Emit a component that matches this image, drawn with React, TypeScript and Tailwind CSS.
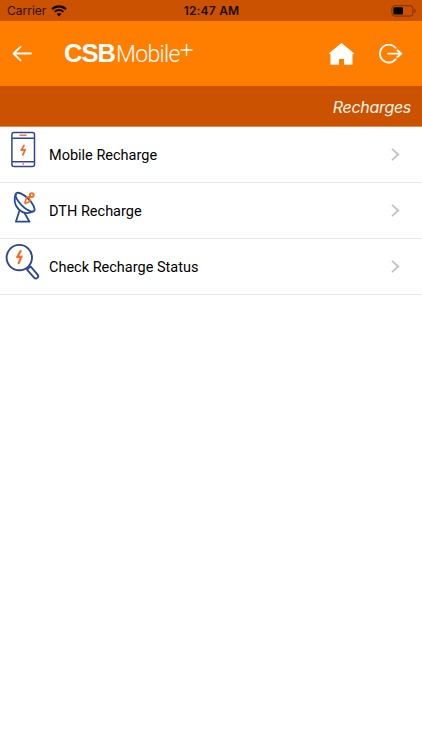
import React from "react";

function StatusBar() {
  return (
    <div className="flex h-[21px] items-center bg-[#cb5200] font-['Inter','Liberation_Sans',sans-serif] text-black">
      <div className="flex flex-1 items-center pl-[7px]">
        <span className="w-[40px] whitespace-nowrap text-[12px] leading-[21px] text-[#2a1100]">Carrier</span>
        <svg className="ml-[4px]" width="16" height="12" viewBox="0 0 16 12" fill="none" stroke="#140800">
          <path d="M1 4.2a10 10 0 0 1 14 0" strokeWidth="2.1" />
          <path d="M3.5 6.9a6.4 6.4 0 0 1 9 0" strokeWidth="1.9" />
          <path d="M8 11.6 5.6 9.1a3.4 3.4 0 0 1 4.8 0z" fill="#140800" stroke="none" />
        </svg>
      </div>
      <span className="text-[12px] font-semibold leading-[21px] tracking-[0.2px] text-[#1d0c00]">12:47 AM</span>
      <div className="flex flex-1 justify-end pr-[6px]">
        <svg width="25" height="12" viewBox="0 0 25 12">
          <rect x="0.9" y="0.7" width="21" height="10.4" rx="2.7" fill="none" stroke="#793100" />
          <rect x="2.4" y="2.3" width="9.6" height="7.2" rx="1.2" fill="#000" />
          <path d="M23.4 4v4q1.3-.7 1.3-2t-1.3-2z" fill="#793100" />
        </svg>
      </div>
    </div>
  );
}

function Header() {
  return (
    <header className="flex h-[65px] items-center bg-[#ff7e00] text-white">
      <svg className="ml-[12px] shrink-0" width="21" height="18" viewBox="0 0 21 18" fill="none" stroke="currentColor" strokeWidth="1.8" strokeLinecap="round" strokeLinejoin="round">
        <path d="M19 8.5H1.5M8.5 1.8 1.5 8.5l7 6.9" />
      </svg>
      <div className="ml-[31px] flex items-baseline whitespace-nowrap leading-[30px]">
        <span className="w-[52px] font-['Liberation_Sans',sans-serif] text-[25.5px] font-bold tracking-[-1px]">CSB</span>
        <span className="w-[64px] font-['Roboto',sans-serif] text-[23px] font-light tracking-[-0.7px]">Mobile</span>
        <svg className="-translate-y-[6px]" width="13" height="12" viewBox="0 0 13 12" stroke="currentColor" strokeWidth="1.4">
          <path d="M6.5 0v12M0.5 6h12" />
        </svg>
      </div>
      <svg className="ml-auto" width="25" height="22" viewBox="0 0 25 22" fill="currentColor">
        <path d="M12.5 0 25 10.2l-.8 1H23.5V21.7H15V16H10v5.7H1.5V11.2H.8L0 10.2z" />
      </svg>
      <svg className="ml-[25px] mr-[19px]" width="24" height="20" viewBox="0 0 24 20" fill="none" stroke="currentColor" strokeWidth="1.8" strokeLinecap="round" strokeLinejoin="round">
        <path d="M16.6 3.9A8.9 8.9 0 1 0 16.6 15.3" />
        <path d="M9 9.6h13.2M18.3 6.2l4.1 3.4-4.1 3.4" />
      </svg>
    </header>
  );
}

const PhoneIcon = () => (
  <svg width="46" height="55" viewBox="0 0 46 55" fill="none" stroke="#30478f" strokeWidth="1.5">
    <rect x="11.9" y="5.4" width="22.6" height="34" rx="2" />
    <path d="M12 11.3h22.5M12 34.7h22.5" />
    <path d="M20 8.3h6" stroke="#f27539" strokeLinecap="round" />
    <circle cx="23.2" cy="37" r=".6" stroke="#f27539" strokeWidth="1" />
    <path d="m24 18.4-2.7 4.8 3.8-.6-2.2 5.3" stroke="#f26a22" strokeWidth="1.7" strokeLinejoin="round" strokeLinecap="round" />
  </svg>
);

const DishIcon = () => (
  <svg width="46" height="55" viewBox="0 0 46 55" fill="none" stroke="#234b98" strokeWidth="1.8" strokeLinejoin="round">
    <path d="m19.4 27.7-3.5 11h13.6l-5.3-9.2" />
    <path d="M16.1 10.4c-2.7 5.2-1.8 11.4 2.3 15.6 4.3 4.3 10.3 5.4 15.6 2.1" />
    <path d="M16.1 10.4c1.9-1.8 7.4.5 12 5.1 4.8 4.7 7.8 10.5 5.9 12.6" />
    <path d="M16.1 10.4c-1.8 2 1 7.3 5.6 11.9 4.7 4.6 10.3 7.7 12.3 5.8" />
    <path d="m24.6 20.6 2.2-6.6 2.9-.1M24.8 20.8l5-2.2.1-3" stroke="#f37021" strokeWidth="1.6" />
    <path d="m28.4 15.5 2.1-2.1" stroke="#f37021" strokeWidth="1.9" />
    <circle cx="31.8" cy="12.1" r="1.9" stroke="#f37021" strokeWidth="2" />
  </svg>
);

const SearchIcon = () => (
  <svg width="46" height="55" viewBox="0 0 46 55" fill="none" stroke="#30478f" strokeWidth="1.9" strokeLinejoin="round">
    <circle cx="19.3" cy="18.6" r="12.7" />
    <path d="m27 30.6 3.5-3.2 7.1 8.2a2.2 2.2 0 0 1-3.5 3z" />
    <path d="m20.6 12.1-3.4 6 4.3-.6-2.8 6.6" stroke="#f26a22" strokeWidth="2.1" strokeLinejoin="round" strokeLinecap="round" />
  </svg>
);

function Row({ icon, label }: { icon: React.ReactNode; label: string }) {
  return (
    <li className="flex h-14 items-center border-b border-[#e4e4e4]">
      {icon}
      <span className="ml-[3px] pt-[3px] text-[14.5px] leading-5 text-black">{label}</span>
      <svg className="ml-auto mr-[22px]" width="9" height="13" viewBox="0 0 9 13" fill="none" stroke="#bfbfc3" strokeWidth="1.7">
        <path d="m1 .8 6.3 5.7L1 12.2" />
      </svg>
    </li>
  );
}

export default function App() {
  return (
    <main className="min-h-screen w-full bg-white font-['Roboto',sans-serif]">
      <StatusBar />
      <Header />
      <div className="h-[41px] border-b border-[#dd8a50] bg-[#cb5200] pr-[11px] pt-[9px] text-right font-['Inter',sans-serif] text-[16px] italic leading-6 tracking-[-0.3px] text-[#fff4e8]">
        Recharges
      </div>
      <ul>
        <Row icon={<PhoneIcon />} label="Mobile Recharge" />
        <Row icon={<DishIcon />} label="DTH Recharge" />
        <Row icon={<SearchIcon />} label="Check Recharge Status" />
      </ul>
    </main>
  );
}
